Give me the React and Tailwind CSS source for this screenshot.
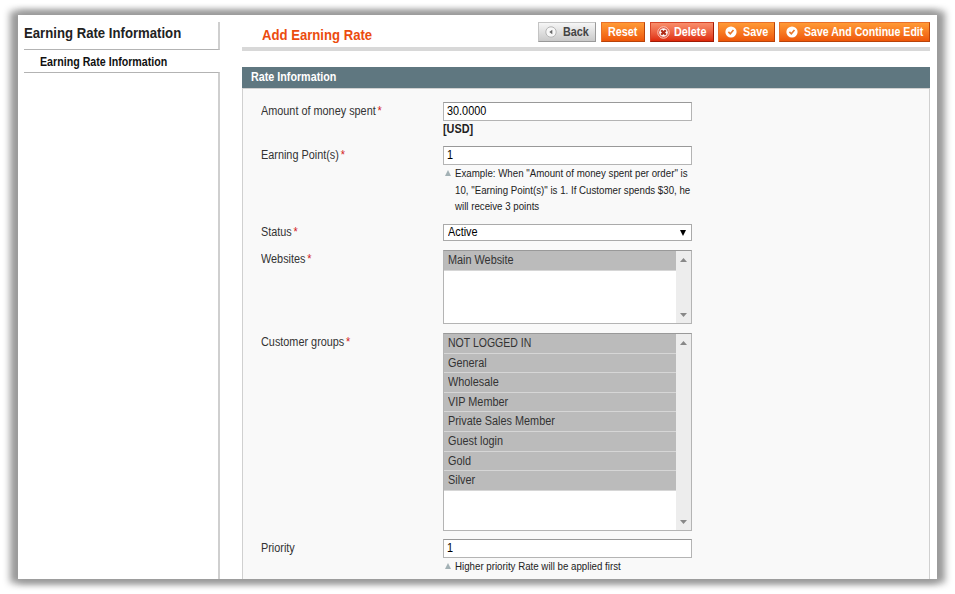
const buttonTones = {
  gray: 'bg-linear-to-b from-[#f6f6f6] to-[#c9c9c9] border-[#c4c4c4] border-r-[#999] border-b-[#999] text-[#444]',
  orange: 'bg-linear-to-b from-[#ff9a35] to-[#ee5607] border-[#e8702a] border-r-[#b8430a] border-b-[#b8430a] text-white',
  red: 'bg-linear-to-b from-[#f98e6b] to-[#de2706] border-[#d6452a] border-r-[#a01b05] border-b-[#a01b05] text-white',
};

function BackIcon() {
  return (
    <svg className="h-3 w-3 shrink-0" viewBox="0 0 12 12">
      <circle cx="6" cy="6" r="5.2" fill="#f7f7f7" stroke="#b5b5b5" />
      <path d="M7.3 3.8v4.4L4.3 6z" fill="#666" />
    </svg>
  );
}

function DeleteIcon() {
  return (
    <svg className="h-[13px] w-[13px] shrink-0" viewBox="0 0 13 13">
      <circle cx="6.5" cy="6.5" r="5.7" fill="#dd4a32" stroke="#ffd9cd" strokeWidth="0.9" />
      <circle cx="6.5" cy="6.5" r="4.3" fill="#fff" />
      <path d="M4.2 4.2l4.6 4.6M8.8 4.2l-4.6 4.6" stroke="#b02c18" strokeWidth="2.2" />
    </svg>
  );
}

function CheckIcon() {
  return (
    <svg className="h-3 w-3 shrink-0" viewBox="0 0 12 12">
      <circle cx="6" cy="6" r="5.6" fill="#fff" />
      <path d="M3.4 5.9l1.9 1.9 3.2-3.8" fill="none" stroke="#e8762c" strokeWidth="1.6" />
    </svg>
  );
}

// Text drawn slightly condensed from its left edge.
function Narrow({ scale = 'scale-x-[0.905]', children }) {
  return <span className={`inline-block origin-left whitespace-nowrap ${scale}`}>{children}</span>;
}

function Button({ tone, width, icon, gap = '', scale = 'scale-x-[0.9]', children }) {
  return (
    <button
      className={`flex h-5 shrink-0 items-center border pl-1.5 text-[12px] leading-[18px] font-bold whitespace-nowrap ${buttonTones[tone]} ${width} ${gap}`}
    >
      {icon}
      <Narrow scale={scale}>{children}</Narrow>
    </button>
  );
}

function Row({ label, required, top, align = 'pt-[2px]', children }) {
  return (
    <div className={`flex ${top}`}>
      <div className={`w-[182px] shrink-0 text-[12px] leading-[14px] text-[#333] ${align}`}>
        <Narrow>
          {label}
          {required && <span className="ml-0.5 text-[#d2201c]">*</span>}
        </Narrow>
      </div>
      <div className="w-[249px]">{children}</div>
    </div>
  );
}

function Input({ value }) {
  return (
    <div className="h-[19px] border border-[#b4b4b4] border-t-[#999] bg-white pl-[3px] text-[12px] leading-[17px] text-black">
      <Narrow>{value}</Narrow>
    </div>
  );
}

function Note({ children }) {
  return (
    <div className="flex">
      <svg className="mt-[5px] ml-0.5 h-[6px] w-[6px] shrink-0" viewBox="0 0 6 6">
        <path d="M3 0l3 6H0z" fill="#a3b1b5" />
      </svg>
      <div className="ml-[4px] text-[10.5px] leading-[16.6px] text-[#222]">
        <Narrow scale="scale-x-[0.925]">{children}</Narrow>
      </div>
    </div>
  );
}

function ListBox({ height, options }) {
  return (
    <div className={`flex border border-[#b4b4b4] border-t-[#999] bg-white ${height}`}>
      <div className="flex-1">
        {options.map((option) => (
          <div
            key={option}
            className="h-[19.6px] border-b border-[#d6d6d6] bg-[#bbb] pl-[3.5px] text-[12px] leading-[18.5px] text-[#333]"
          >
            <Narrow scale={option === 'NOT LOGGED IN' ? 'scale-x-[0.875]' : 'scale-x-[0.905]'}>{option}</Narrow>
          </div>
        ))}
      </div>
      <div className="flex w-[15px] flex-col items-center justify-between bg-[#ededed] pt-[7px] pr-px pb-[6px]">
        <svg className="h-[4px] w-[7px]" viewBox="0 0 7 4">
          <path d="M3.5 0L7 4H0z" fill="#888" />
        </svg>
        <svg className="h-[4px] w-[7px]" viewBox="0 0 7 4">
          <path d="M3.5 4L7 0H0z" fill="#888" />
        </svg>
      </div>
    </div>
  );
}

const groups = ['NOT LOGGED IN', 'General', 'Wholesale', 'VIP Member', 'Private Sales Member', 'Guest login', 'Gold', 'Silver'];

export default function App() {
  return (
    <div className="h-[594px] w-[955px] overflow-hidden bg-white pt-[15px] pl-[18px] font-['Liberation_Sans',Arial,sans-serif]">
      <div className="h-[564px] w-[919px] shadow-[-4px_0_7px_4px_#9b9b9b,4px_0_7px_4px_#9b9b9b]">
        <div className="flex h-[564px] w-[919px] overflow-hidden bg-white pt-[7px] pl-1.5">
          <aside className="flex w-[196px] flex-col">
            <h3 className="h-7 border-r-2 border-b border-[#b3b3b3] border-r-[#cfcfcf] text-[14px] leading-[22px] font-bold text-[#222]">
              <Narrow scale="scale-x-[0.94]">Earning Rate Information</Narrow>
            </h3>
            <div className="h-[22px] pl-4 text-[12px] leading-6 font-bold text-[#111]">
              <Narrow scale="scale-x-[0.888]">Earning Rate Information</Narrow>
            </div>
            <div className="flex-1 border-t border-r-2 border-[#b3b3b3] border-r-[#cfcfcf]" />
          </aside>

          <main className="ml-[22px] flex w-[688px] flex-col">
            <div className="flex h-[29px] shrink-0 justify-between border-b-4 border-[#d8d8d8] pl-5">
              <h2 className="text-[14px] leading-[26px] font-bold text-[#eb4c0f]">
                <Narrow scale="scale-x-[0.938]">Add Earning Rate</Narrow>
              </h2>
              <div className="flex">
                <Button tone="gray" width="w-[58px]" gap="gap-1.5" icon={<BackIcon />}>Back</Button>
                <Button tone="orange" width="ml-[5px] w-[44px]">Reset</Button>
                <Button tone="red" width="ml-[5px] w-[64px]" gap="gap-1" icon={<DeleteIcon />}>Delete</Button>
                <Button tone="orange" width="ml-1 w-[57px]" gap="gap-[6px]" icon={<CheckIcon />}>Save</Button>
                <Button tone="orange" width="ml-1 w-[151px]" gap="gap-[6px]" scale="scale-x-[0.88]" icon={<CheckIcon />}>
                  Save And Continue Edit
                </Button>
              </div>
            </div>

            <h4 className="mt-4 h-[21px] shrink-0 bg-[#5f7780] pl-[9px] text-[12px] leading-[20px] font-bold text-white">
              <Narrow scale="scale-x-[0.895]">Rate Information</Narrow>
            </h4>
            <section className="flex-1 border border-b-0 border-[#d0d0d0] bg-[#f9f9f9] pl-[18px]">
              <Row label="Amount of money spent" required top="mt-[13px] h-[35px]">
                <Input value="30.0000" />
                <div className="text-[12px] leading-4 font-bold text-[#222]">
                  <Narrow>[USD]</Narrow>
                </div>
              </Row>
              <Row label="Earning Point(s)" required top="mt-[9px] h-[69px]">
                <Input value="1" />
                <Note>
                  Example: When "Amount of money spent per order" is
                  <br />
                  10, "Earning Point(s)" is 1. If Customer spends $30, he
                  <br />
                  will receive 3 points
                </Note>
              </Row>
              <Row label="Status" required top="mt-[9px] h-[17px]" align="pt-px">
                <div className="flex h-[17px] items-center justify-between border border-[#aaa] bg-white pr-[5px] pl-[4px] text-[12px] leading-[15px] text-black">
                  <Narrow>Active</Narrow>
                  <svg className="h-[7px] w-[6px]" viewBox="0 0 6 7">
                    <path d="M0 1h6L3 7z" fill="#000" />
                  </svg>
                </div>
              </Row>
              <Row label="Websites" required top="mt-[9px]">
                <ListBox height="h-[74px]" options={['Main Website']} />
              </Row>
              <Row label="Customer groups" required top="mt-[9px]">
                <ListBox height="h-[198px]" options={groups} />
              </Row>
              <Row label="Priority" top="mt-2">
                <Input value="1" />
                <Note>Higher priority Rate will be applied first</Note>
              </Row>
            </section>
          </main>
        </div>
      </div>
    </div>
  );
}
